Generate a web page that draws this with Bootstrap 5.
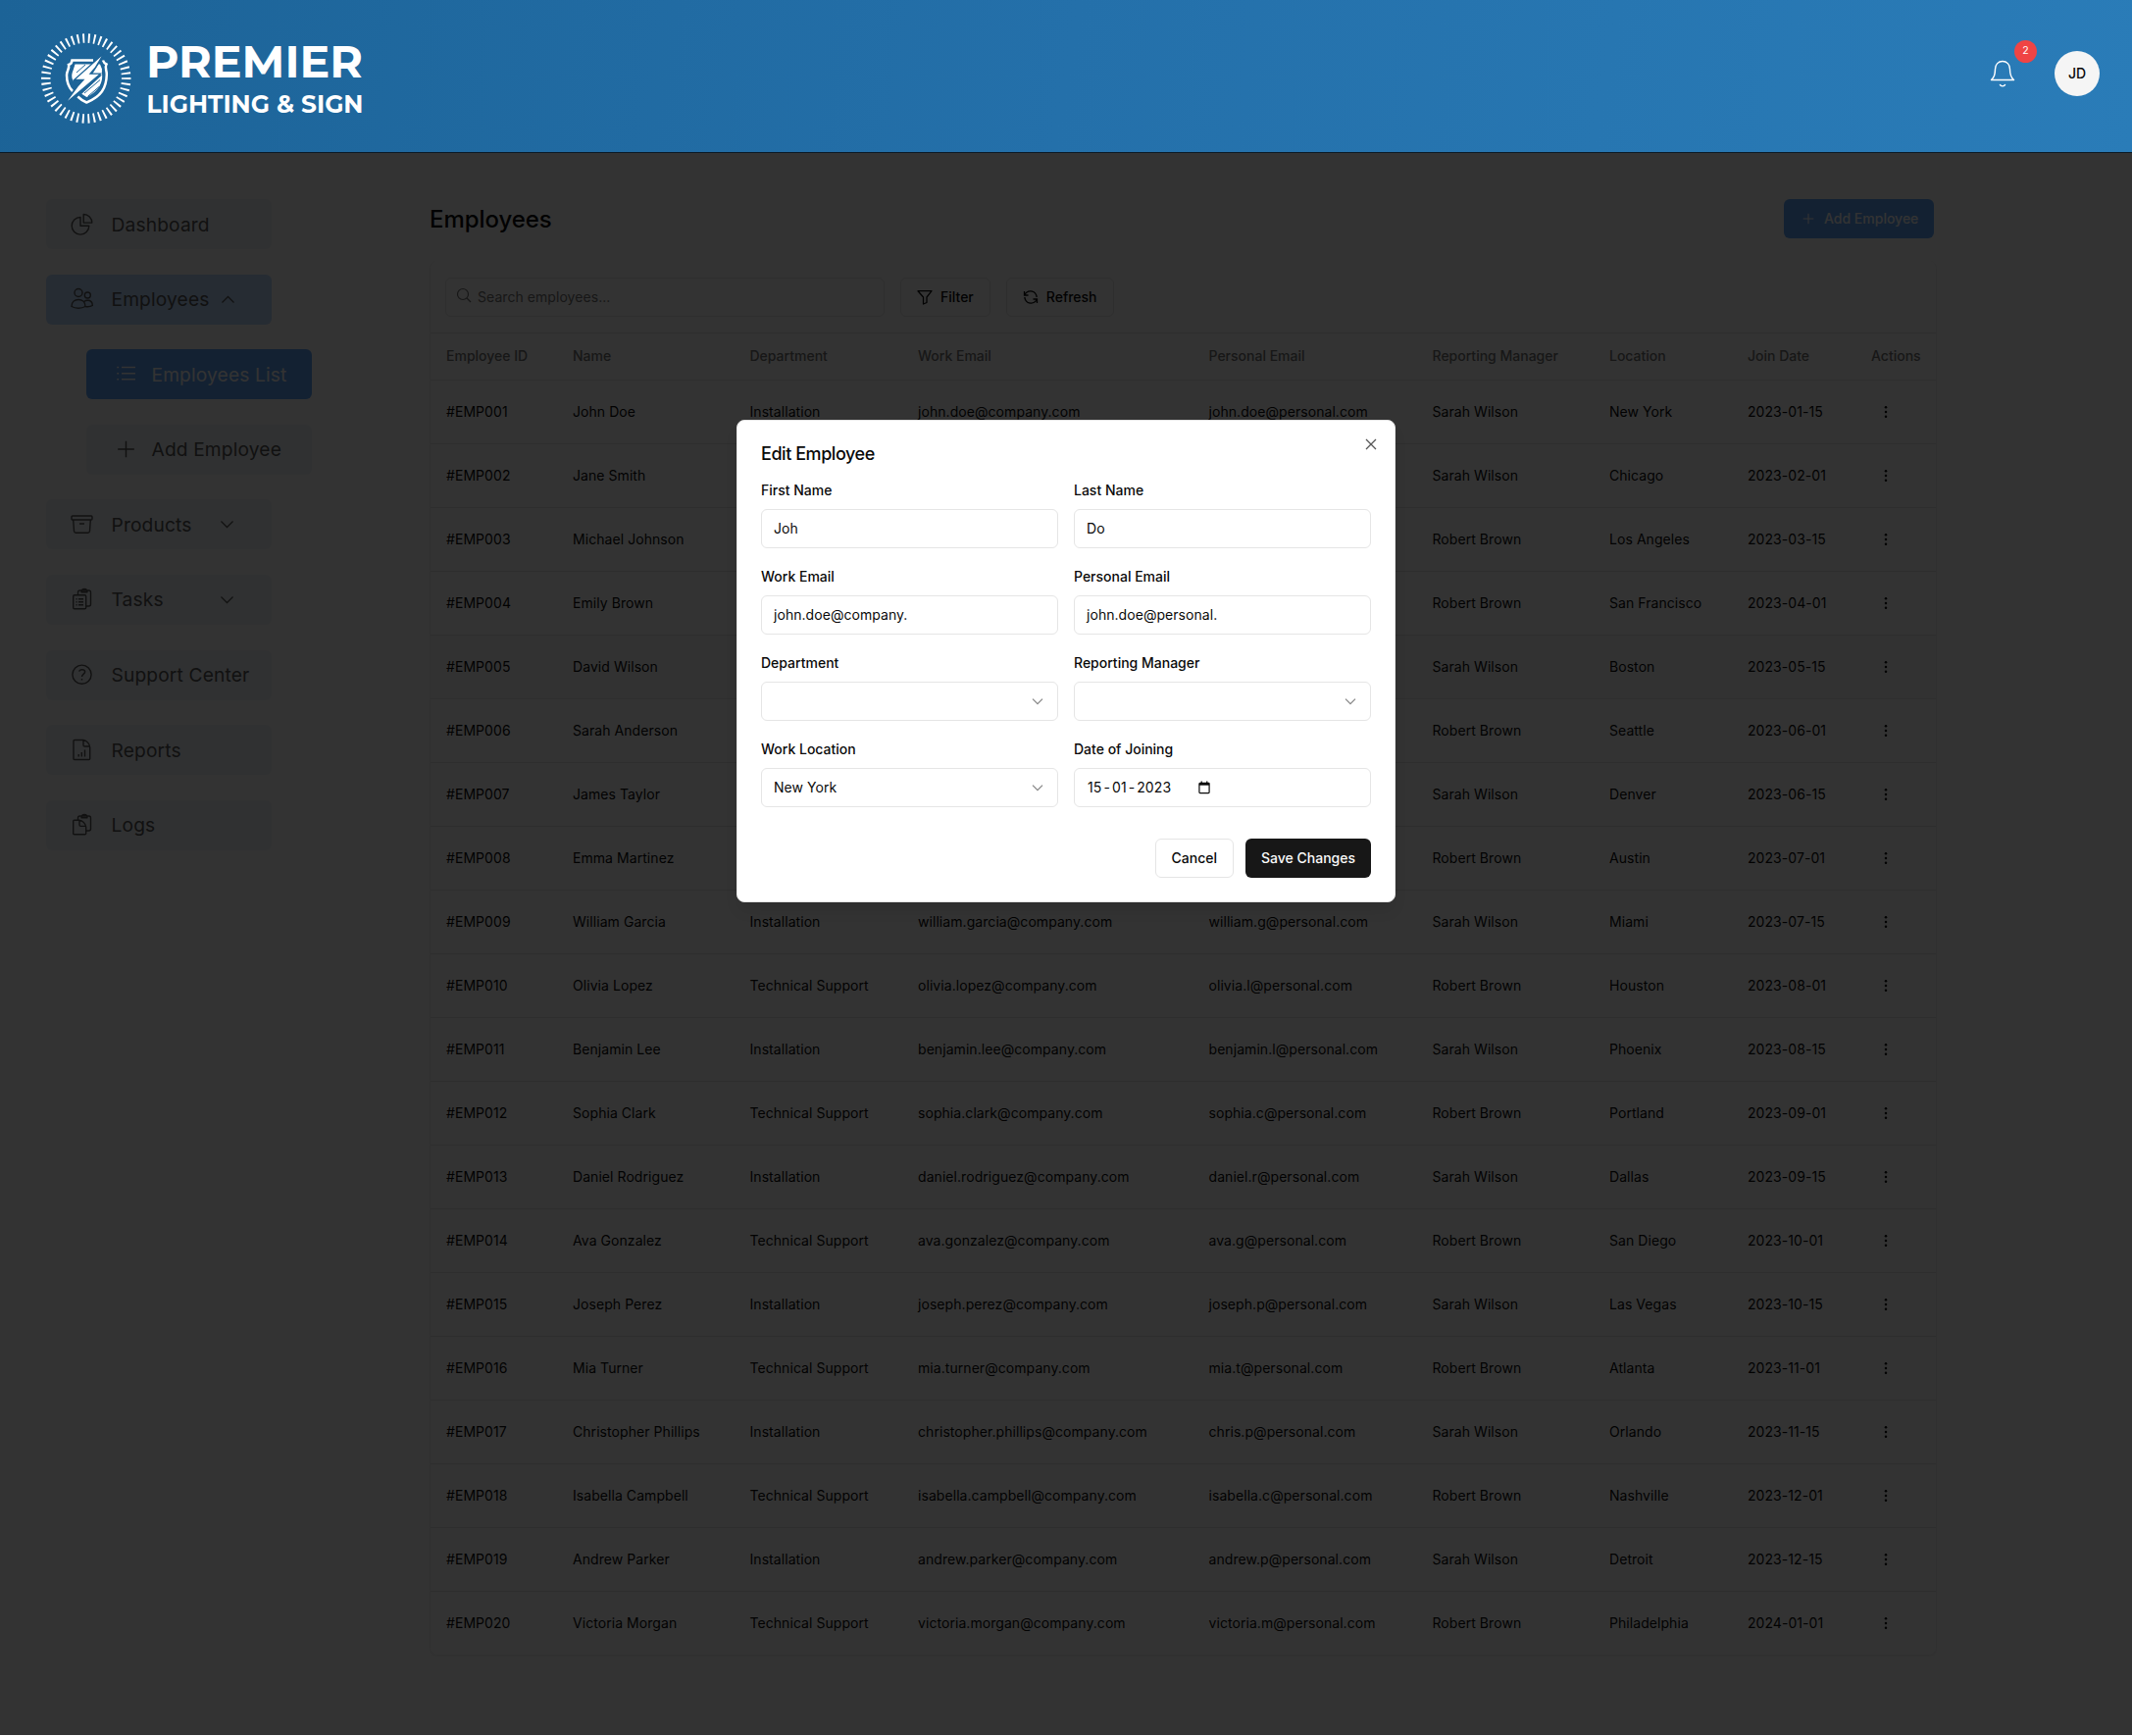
<!DOCTYPE html>
<html lang="en">
<head>
<meta charset="utf-8">
<meta name="viewport" content="width=device-width, initial-scale=1">
<title>Employees - Premier Lighting &amp; Sign</title>
<link rel="stylesheet" href="https://cdn.jsdelivr.net/npm/bootstrap@5.3.0/dist/css/bootstrap.min.css">
<style>
body{font-family:Inter,"Liberation Sans",sans-serif;font-size:14px;line-height:20px;color:#0a0a0a;height:1770px;overflow:hidden;background:#fff}
svg{display:block;flex:none;fill:none;stroke:currentColor}
.topbar{height:156px;background:linear-gradient(100deg,#1c6397 0%,#2470aa 50%,#2a7cb8 100%);border-bottom:1px solid #0b1a26;z-index:20;padding:0 33px 0 41px}
.topbar-end{height:150px;gap:33px}
.brand-text{color:#fff}
.brand-text text{font-family:Montserrat,"Open Sans",sans-serif;fill:#fff;stroke:none}
.brand-text .solid{fill:#fff;stroke:none}
.brand-text .streak{stroke:#1c6397}
.brand-text .bolt{fill:#fff;stroke:#1c6397}
.bell{width:40px;height:40px;color:#fff}
.bell .badge{width:23px;height:23px;top:-14px;left:32px;font-size:10.5px;font-weight:400;background:#ef4444}
.avatar{width:46px;height:46px;background:#f5f5f5;color:#0a0a0a;font-size:14px;font-weight:500}
.backdrop{top:156px;left:0;right:0;bottom:1px;background:rgba(0,0,0,.8);z-index:10}
.side{width:438px;flex:none;padding:47px 0 0 47px;gap:25.6px}
.side .nav-link{width:230px;height:51px;padding:0 24px;background:#f1f5f9;border-radius:6px;font-size:19.2px;line-height:28px;letter-spacing:.14px;color:#555;gap:17.5px}
.side .nav-link .glyph{width:25px;height:26px}
.side .nav-link.open{background:#bfdbfe}
.side .nav-link.active{background:#60a5fa;color:#fff}
.side .nav-link.sub{margin-left:41px;padding-left:28px;gap:13.5px}
.side .caret{margin-left:auto;margin-right:13px}
.side .open .caret{margin-left:-7px}
.main{width:1537px;flex:none;padding-top:47px}
.page-title{font-size:24px;line-height:32px;font-weight:500;letter-spacing:-.05px;margin-top:5px}
.btn{height:40px;border-radius:6px;font-size:14px;line-height:20px;font-weight:500;padding:0 16px;white-space:nowrap}
.btn-add,.btn-add:hover{width:153px;background:#60a5fa;color:#fff;margin-right:3px}
.btn-line,.btn-line:hover{border:1px solid #e5e5e5;color:#0a0a0a;background:#fff}
.btn-save{background:#171717;color:#fafafa;width:128px;padding:0}
.panel{margin-top:23px;border:1px solid #f1f1f1;border-top:0;border-radius:8px;box-shadow:0 1px 2px rgba(0,0,0,.06)}
.tools{height:74px;padding:17px 15px 0;border-bottom:1px solid #e5e5e5;gap:16px}
.search{width:448px;height:40px;border:1px solid #e5e5e5;border-radius:6px;color:#737373;padding:0 10px;gap:6px;letter-spacing:.06px}
.search svg{margin-top:-4px}
.grid{table-layout:fixed;width:1535px;margin:0;--bs-table-bg:transparent;font-size:14px;letter-spacing:.06px}
.grid th{height:47px;font-weight:500;color:#737373;padding:0 16px;vertical-align:middle;border-color:#e5e5e5;white-space:nowrap;letter-spacing:0}
.grid td{height:65px;padding:0 16px;vertical-align:middle;border-color:#e5e5e5;color:#0a0a0a;white-space:nowrap}
.grid tbody tr:last-child td{border-bottom:0}
.grid tr.hovered td{background:#fafafa}
.dots{margin-left:7px;fill:#0a0a0a;stroke:none}
.dlg{width:672px;height:492px;left:751px;top:428px;z-index:30;background:#fff;border:1px solid #e5e5e5;border-radius:8px;padding:24px;box-shadow:0 10px 15px -3px rgba(0,0,0,.1)}
.dlg h2{font-size:18px;line-height:18px;font-weight:500;letter-spacing:-.45px;margin:1px 0 17px}
.dlg-close{top:16px;right:16px;width:16px;height:16px;color:#555}
.fields{display:grid;grid-template-columns:1fr 1fr;gap:16px}
.fields label{display:block;font-weight:500;line-height:14px;height:14px;margin-bottom:12px}
.fields .cell{height:72px;padding-top:4px}
.field{height:40px;border:1px solid #e5e5e5;border-radius:6px;padding:0 12px;font-size:14px;letter-spacing:.05px}
.field svg{color:#858585}
.field .cal{color:#0a0a0a}
.dlg-actions{gap:12px;margin-top:30px}
.date-val{width:114px;padding-left:1px;letter-spacing:.1px}
.date-val i{font-style:normal;padding:0 2px}
</style>
<script src="https://cdn.jsdelivr.net/npm/bootstrap@5.3.0/dist/js/bootstrap.bundle.min.js"></script>
</head>
<body class="position-relative">
<svg width="0" height="0" class="position-absolute">
<defs>
<symbol id="i-plus" viewBox="0 0 24 24"><path d="M12 4v16M4 12h16"/></symbol>
<symbol id="i-down" viewBox="0 0 24 24"><path d="m4.500 8.500 7.500 7.500 7.500-7.500"/></symbol>
<symbol id="i-caret" viewBox="0 0 24 24"><path d="m3.500 7.800 8.500 8.500 8.500-8.500"/></symbol>
<symbol id="i-up" viewBox="0 0 24 24"><path d="m3.500 16.200 8.500-8.500 8.500 8.500"/></symbol>
<symbol id="i-dots" viewBox="0 0 16 16"><circle cx="8" cy="3.200" r="1.250"/><circle cx="8" cy="8" r="1.250"/><circle cx="8" cy="12.800" r="1.250"/></symbol>
</defs>
</svg>

<header class="topbar position-relative d-flex justify-content-between">
  <svg class="brand-text" width="335" height="154" viewBox="41 0 335 154">
    <circle cx="87.700" cy="80" r="41" stroke-width="9.500" stroke-dasharray="1.900 3.700" transform="rotate(-1.300 87.700 80)"/>
    <path d="M95 61.500H73.500c-.3 2.500-1.500 4-3.500 4.500 1.200 4-2 6-2 10.500 0 7 2 12.500 6 16.500M105 61.500c.6 2 1.800 3.200 3.500 4-2 3.500.5 6 .3 10.500C108.500 90 103 98.500 88.300 104.500c-3.500-1.500-6.500-3.500-9-6" stroke-width="2.500"/>
    <path class="solid" d="M76.500 65.500H94L74.500 82.500c-2-4-1.500-7.500.3-11.500zM100.500 65.500h1.500l2 5c-.5 4 1 7-.4 12-2 7.500-7 12.500-15.300 16.500l-5-3.200L104 76.500l-9.500-1.500z"/>
    <path class="streak" d="m78 74 9-8M86 95l16-13.500M90 98l11-9.500" stroke-width="1"/>
    <path class="bolt" stroke-width="1.300" d="M106.500 53.700 75.500 81.500h9.500l-6 6.500L65 107l37.500-31.800H92l5.500-6.500z"/>
    <text x="149" y="79" font-size="45.500" font-weight="700" textLength="221" lengthAdjust="spacingAndGlyphs">PREMIER</text>
    <text x="149.500" y="114.500" font-size="25" font-weight="700" textLength="221" lengthAdjust="spacingAndGlyphs">LIGHTING &amp; SIGN</text>
  </svg>
  <div class="topbar-end d-flex align-items-center">
    <div class="bell position-relative d-flex align-items-center justify-content-center">
      <svg width="26" height="28" viewBox="0 0 26 28" stroke-width="1.400" stroke-linejoin="round"><path d="M1.500 20.500c3-2.500 4-6 4-11 0-5 3.300-8 7.500-8s7.500 3 7.500 8c0 5 1 8.500 4 11z"/><path d="M10.200 25c.5 1.300 1.500 1.900 2.800 1.900s2.300-.6 2.800-1.900"/></svg>
      <span class="badge position-absolute rounded-circle d-flex align-items-center justify-content-center p-0">2</span>
    </div>
    <div class="avatar rounded-circle d-flex align-items-center justify-content-center">JD</div>
  </div>
</header>

<div class="d-flex">
  <nav class="side nav flex-column flex-nowrap">
    <a class="nav-link d-flex align-items-center"><svg class="glyph" viewBox="0 0 25 26" stroke-width="1.400" stroke-linejoin="round"><path d="M11 5.500a8.800 8.800 0 1 0 8.800 8.800H11z"/><path d="M14.200 2.500v8.600h8.600a8.600 8.600 0 0 0-8.600-8.600z"/></svg>Dashboard</a>
    <a class="nav-link open d-flex align-items-center"><svg class="glyph" viewBox="0 0 25 26" stroke-width="1.400"><circle cx="9" cy="6.500" r="4"/><circle cx="18.300" cy="9" r="3"/><path d="M2 20.500c0-4.500 3-7 7-7s7 2.500 7 7c-4 2.300-10 2.300-14 0zM14.800 15.500c1-.8 2.200-1.200 3.500-1.200 3 0 5 2 5 5.200-2 1.100-4.500 1.400-7.200 1"/></svg>Employees<svg width="17" height="17" class="caret" stroke-width="1.700"><use href="#i-up"/></svg></a>
    <a class="nav-link sub active d-flex align-items-center"><svg class="glyph" viewBox="0 0 25 26" stroke-width="1.400"><path d="M8 5.500h14M8 11.700h14M8 17.700h14M3.300 5.500h1.800M3.300 11.700h1.800M3.300 17.700h1.800"/></svg>Employees List</a>
    <a class="nav-link sub d-flex align-items-center"><svg class="glyph" stroke-width="1.400"><use href="#i-plus"/></svg>Add Employee</a>
    <a class="nav-link d-flex align-items-center"><svg class="glyph" viewBox="0 0 25 26" stroke-width="1.400" stroke-linejoin="round"><rect x="2" y="4" width="21" height="4" rx="1"/><path d="m3.700 8 .8 11.500c.1 1 .8 1.700 1.800 1.700h12.400c1 0 1.700-.7 1.800-1.700L21.300 8M10 12h5"/></svg>Products<svg width="17" height="17" class="caret" stroke-width="1.700"><use href="#i-caret"/></svg></a>
    <a class="nav-link d-flex align-items-center"><svg class="glyph" viewBox="0 0 25 26" stroke-width="1.400" stroke-linejoin="round"><rect x="3.700" y="8.700" width="13" height="14" rx="1.200"/><path d="M8.500 8.500V6c0-1.300.8-2 2-2h9c1.200 0 2 .7 2 2v12c0 1.200-.8 2-2 2h-2.500M12 5.800c0-2.200 1.200-3.300 3-3.300s3 1.100 3 3.300zM6.500 12.700h1.200M6.500 15.700h1.200M6.500 18.700h1.200M9 12.700h5M9 15.700h5M9 18.700h5"/></svg>Tasks<svg width="17" height="17" class="caret" stroke-width="1.700"><use href="#i-caret"/></svg></a>
    <a class="nav-link d-flex align-items-center text-nowrap"><svg class="glyph" viewBox="0 0 25 26" stroke-width="1.400"><circle cx="12.500" cy="12.700" r="9.600"/><path d="M9.700 9.700c.6-2.600 5.600-2.700 6 .1.200 2.300-3.200 2.300-3.200 5.300M12.500 17v1.400"/></svg>Support Center</a>
    <a class="nav-link d-flex align-items-center"><svg class="glyph" viewBox="0 0 25 26" stroke-width="1.400" stroke-linejoin="round"><path d="M5 2.500h9c3.500.5 6.500 4 6.700 7.500v11.500c0 .6-.4 1-1 1H5c-.6 0-1-.4-1-1v-18c0-.6.400-1 1-1zM14 2.500v5.200c0 .9.500 1.300 1.400 1.300h5.200M9.200 19.500v-2.500M12.300 19.500v-4.500M15.500 19.500v-7"/></svg>Reports</a>
    <a class="nav-link d-flex align-items-center"><svg class="glyph" viewBox="0 0 25 26" stroke-width="1.400" stroke-linejoin="round"><path d="M4.700 8.200h5c3.500.5 6.500 3.500 7 7v6.500c0 .6-.4 1-1 1h-11c-.6 0-1-.4-1-1V9.200c0-.6.400-1 1-1zM10 8.200v4.800c0 .9.500 1.400 1.400 1.400h5M8.500 8V6c0-1.300.8-2 2-2h9c1.200 0 2 .7 2 2v11c0 1.200-.8 2-2 2h-2.500M12 5.800c0-2.200 1.200-3.300 3-3.300s3 1.100 3 3.300z"/></svg>Logs</a>
  </nav>

  <main class="main">
    <div class="d-flex justify-content-between">
      <h1 class="page-title mb-0">Employees</h1>
      <button class="btn btn-add d-flex align-items-center"><svg width="16" height="16" class="me-2" stroke-width="1.700"><use href="#i-plus"/></svg>Add Employee</button>
    </div>
    <section class="panel">
      <div class="tools d-flex">
        <div class="search d-flex align-items-center"><svg width="16" height="16" viewBox="0 0 16 16" stroke-width="1.200"><circle cx="7" cy="7" r="5.500"/><path d="m11 11 4 4"/></svg><span>Search employees...</span></div>
        <button class="btn btn-line d-flex align-items-center"><svg width="16" height="16" viewBox="0 0 16 16" stroke-width="1.300" stroke-linejoin="round" class="me-2"><path d="M1 1.700h14l-5 6.300v5.500L6.500 15V8z"/></svg>Filter</button>
        <button class="btn btn-line d-flex align-items-center"><svg width="16" height="16" viewBox="0 0 16 16" stroke-width="1.300" class="me-2"><path d="M1.500 2v4h4M1.800 5.800C4 1 11 .5 13.500 5.500c.4.8.6 1.600.6 2.500M14.500 14v-4h-4M14.200 10.200C12 15 5 15.500 2.500 10.500 2.100 9.700 1.900 8.900 1.900 8"/></svg>Refresh</button>
      </div>
      <table class="table grid">
        <colgroup><col style="width:129px"><col style="width:180.500px"><col style="width:171.500px"><col style="width:296.500px"><col style="width:228px"><col style="width:180.500px"><col style="width:141px"><col style="width:126px"><col></colgroup>
        <thead><tr><th>Employee ID</th><th>Name</th><th>Department</th><th>Work Email</th><th>Personal Email</th><th>Reporting Manager</th><th>Location</th><th>Join Date</th><th>Actions</th></tr></thead>
        <tbody id="rows"></tbody>
      </table>
    </section>
  </main>
</div>

<div class="backdrop position-absolute"></div>

<div class="dlg position-absolute" role="dialog" aria-label="Edit Employee">
  <svg class="dlg-close position-absolute" viewBox="0 0 16 16" stroke-width="1.300"><path d="m3 3 10 10M13 3 3 13"/></svg>
  <h2>Edit Employee</h2>
  <div class="fields">
    <div class="cell"><label>First Name</label><div class="field d-flex align-items-center">Joh</div></div>
    <div class="cell"><label>Last Name</label><div class="field d-flex align-items-center">Do</div></div>
    <div class="cell"><label>Work Email</label><div class="field d-flex align-items-center">john.doe@company.</div></div>
    <div class="cell"><label>Personal Email</label><div class="field d-flex align-items-center">john.doe@personal.</div></div>
    <div class="cell"><label>Department</label><div class="field d-flex align-items-center justify-content-end"><svg width="16" height="16" stroke-width="1.800"><use href="#i-down"/></svg></div></div>
    <div class="cell"><label>Reporting Manager</label><div class="field d-flex align-items-center justify-content-end"><svg width="16" height="16" stroke-width="1.800"><use href="#i-down"/></svg></div></div>
    <div class="cell"><label>Work Location</label><div class="field d-flex align-items-center justify-content-between">New York<svg width="16" height="16" stroke-width="1.800"><use href="#i-down"/></svg></div></div>
    <div class="cell"><label>Date of Joining</label><div class="field d-flex align-items-center"><span class="date-val">15<i>-</i>01<i>-</i>2023</span><svg class="cal" width="12" height="14" viewBox="0 0 13 14" stroke-width="1.300"><rect x="1" y="2" width="11" height="11" rx=".8"/><path d="M1 3.200h11" stroke-width="2.600"/><path d="M3.500 0v2M9.500 0v2"/></svg></div></div>
  </div>
  <div class="dlg-actions d-flex justify-content-end">
    <button class="btn btn-line">Cancel</button>
    <button class="btn btn-save">Save Changes</button>
  </div>
</div>

<script>
const people=[
["John Doe","john.doe","john.doe","New York","2023-01-15"],
["Jane Smith","jane.smith","jane.s","Chicago","2023-02-01"],
["Michael Johnson","michael.j","michael.j","Los Angeles","2023-03-15"],
["Emily Brown","emily.brown","emily.b","San Francisco","2023-04-01"],
["David Wilson","david.wilson","david.w","Boston","2023-05-15"],
["Sarah Anderson","sarah.a","sarah.a","Seattle","2023-06-01"],
["James Taylor","james.taylor","james.t","Denver","2023-06-15"],
["Emma Martinez","emma.martinez","emma.m","Austin","2023-07-01"],
["William Garcia","william.garcia","william.g","Miami","2023-07-15"],
["Olivia Lopez","olivia.lopez","olivia.l","Houston","2023-08-01"],
["Benjamin Lee","benjamin.lee","benjamin.l","Phoenix","2023-08-15"],
["Sophia Clark","sophia.clark","sophia.c","Portland","2023-09-01"],
["Daniel Rodriguez","daniel.rodriguez","daniel.r","Dallas","2023-09-15"],
["Ava Gonzalez","ava.gonzalez","ava.g","San Diego","2023-10-01"],
["Joseph Perez","joseph.perez","joseph.p","Las Vegas","2023-10-15"],
["Mia Turner","mia.turner","mia.t","Atlanta","2023-11-01"],
["Christopher Phillips","christopher.phillips","chris.p","Orlando","2023-11-15"],
["Isabella Campbell","isabella.campbell","isabella.c","Nashville","2023-12-01"],
["Andrew Parker","andrew.parker","andrew.p","Detroit","2023-12-15"],
["Victoria Morgan","victoria.morgan","victoria.m","Philadelphia","2024-01-01"]];
const managers=["Sarah Wilson","Sarah Wilson","Robert Brown","Robert Brown"];
document.getElementById("rows").innerHTML=people.map((p,i)=>{
  const boss=i<4?managers[i]:(i%2?"Robert Brown":"Sarah Wilson");
  return `<tr class="${i===4?"hovered":""}"><td>#EMP${String(i+1).padStart(3,"0")}</td><td>${p[0]}</td><td>${i%2?"Technical Support":"Installation"}</td><td>${p[1]}@company.com</td><td>${p[2]}@personal.com</td><td>${boss}</td><td>${p[3]}</td><td>${p[4]}</td><td><svg class="dots" width="16" height="16"><use href="#i-dots"/></svg></td></tr>`;
}).join("");
</script>
</body>
</html>
